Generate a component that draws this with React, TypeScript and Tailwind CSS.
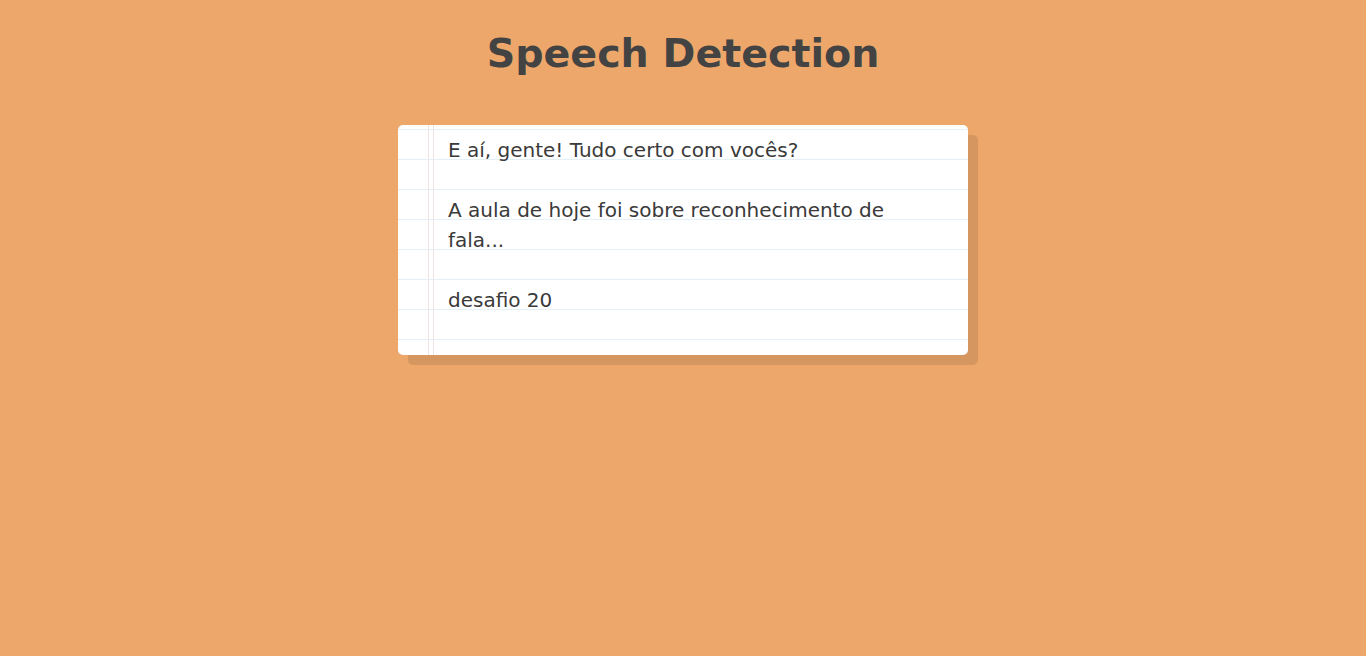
import React from 'react';

const lines = [
  'E aí, gente! Tudo certo com vocês?',
  'A aula de hoje foi sobre reconhecimento de fala...',
  'desafio 20',
];

export default function App() {
  return (
    <div className="min-h-screen bg-[#eea76a] font-['DejaVu_Sans',sans-serif] pt-[30px]">
      <h1 className="text-center text-[39.6px] leading-[47px] font-bold text-[#434343]">
        Speech Detection
      </h1>

      <div
        className="relative mx-auto mt-[48px] w-[570px] rounded-[5px] pt-[10px] pr-[26px] pb-[10px] pl-[50px] shadow-[10px_10px_0_rgba(0,0,0,0.1)] bg-white bg-[linear-gradient(to_bottom,#e4f0f7_0px,#e4f0f7_1px,#ffffff_1px)] bg-[length:100%_30px] bg-[position:0_4px] text-[20px] leading-[30px] text-[#3a3a3a]"
      >
        <div className="absolute top-0 bottom-0 left-[30px] w-[6px] border-x border-[#efe4e4]" />
        {lines.map((text, i) => (
          <p key={i} className="relative mb-[30px]">
            {text}
          </p>
        ))}
      </div>
    </div>
  );
}
